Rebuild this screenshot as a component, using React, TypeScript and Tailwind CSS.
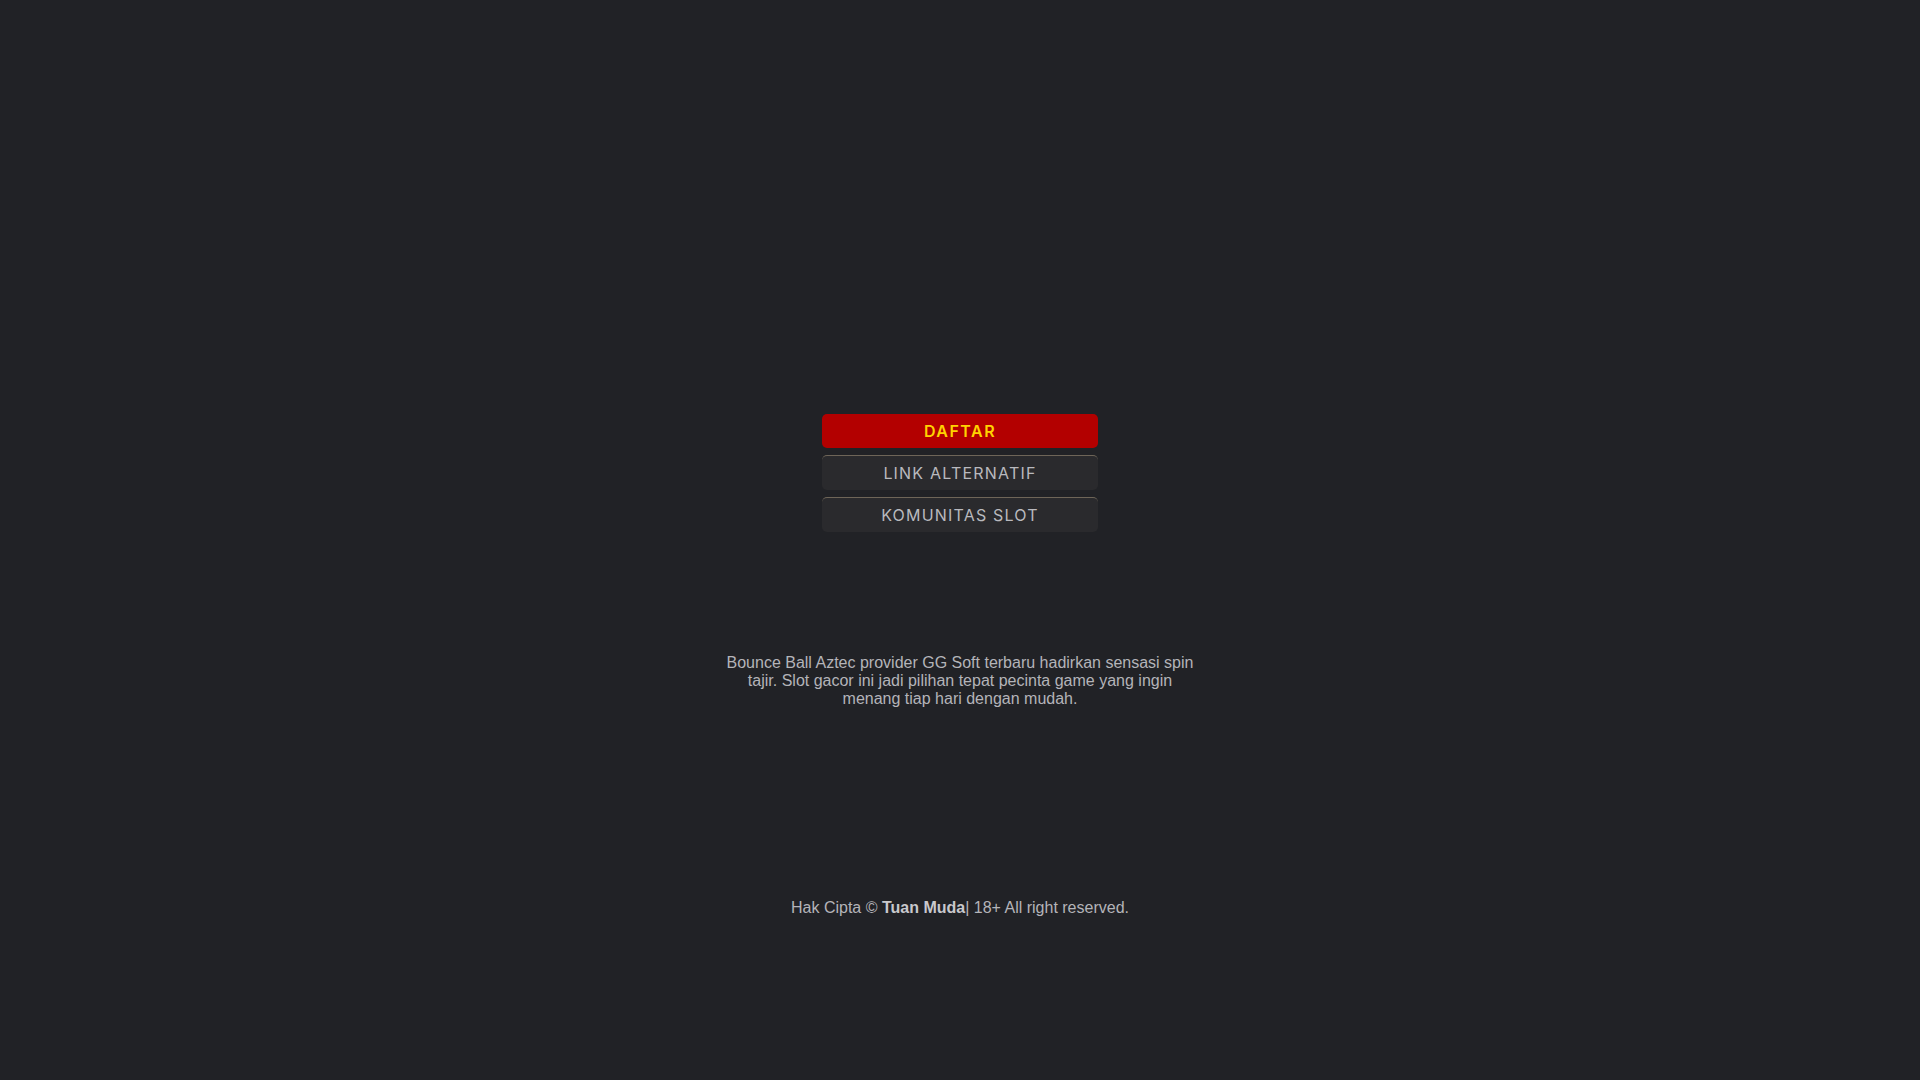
import React from "react";

const links = [
  { label: "DAFTAR", primary: true },
  { label: "LINK ALTERNATIF", primary: false },
  { label: "KOMUNITAS SLOT", primary: false },
];

export default function App() {
  return (
    <div className="min-h-screen bg-[#212226] flex flex-col items-center font-['Liberation_Sans',Arial,sans-serif] text-[#b4b4b9]">
      {/* tombol */}
      <div className="mt-[414px] flex w-[276px] flex-col gap-[7px]">
        {links.map((l) =>
          l.primary ? (
            <a
              key={l.label}
              href="#"
              className="flex h-[34px] items-center justify-center rounded-[5px] bg-[#b30000] font-['Inter',sans-serif] text-[16px] font-semibold tracking-[1.5px] text-[#ffd200]"
            >
              {l.label}
            </a>
          ) : (
            <a
              key={l.label}
              href="#"
              className="flex h-[35px] items-center justify-center rounded-[5px] border-t border-[#6e6558] bg-[#2a2a2d] font-['Inter',sans-serif] text-[16px] tracking-[1.2px] text-[#b9b9be]"
            >
              {l.label}
            </a>
          )
        )}
      </div>

      <p className="mt-[122px] w-[480px] text-center text-[16px] leading-[18px]">
        Bounce Ball Aztec provider GG Soft terbaru hadirkan sensasi spin tajir. Slot gacor ini jadi pilihan tepat
        pecinta game yang ingin menang tiap hari dengan mudah.
      </p>

      <footer className="mt-[191px] text-[16px] leading-[18px]">
        Hak Cipta © <b className="text-[#c8c8cc]">Tuan Muda</b>| 18+ All right reserved.
      </footer>
    </div>
  );
}
